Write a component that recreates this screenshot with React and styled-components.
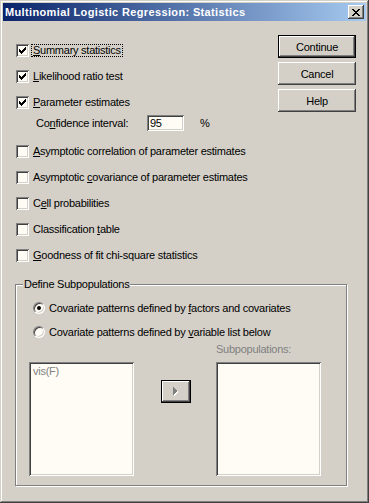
import styled, { createGlobalStyle, css } from 'styled-components';

const GlobalStyle = createGlobalStyle`
  html, body {
    margin: 0;
    padding: 0;
    background: #d4d0c8;
  }
  body {
    font-family: "Liberation Sans", Arial, sans-serif;
    font-size: 11px;
    letter-spacing: -0.25px;
    color: #000;
  }
`;

const raised = css`
  background: #d4d0c8;
  box-shadow: inset -1px -1px #404040, inset 1px 1px #fff,
    inset -2px -2px #808080, inset 2px 2px #d4d0c8;
`;

const sunken = css`
  background: #fffcf5;
  box-shadow: inset 1px 1px #808080, inset -1px -1px #fff,
    inset 2px 2px #404040, inset -2px -2px #d4d0c8;
`;

const Window = styled.div`
  width: 369px;
  height: 503px;
  box-sizing: border-box;
  padding: 3px;
  background: #d4d0c8;
  box-shadow: inset -1px -1px #404040, inset 1px 1px #d4d0c8,
    inset -2px -2px #808080, inset 2px 2px #fff;
  display: flex;
  flex-direction: column;
`;

const TitleBar = styled.div`
  height: 18px;
  display: flex;
  align-items: center;
  justify-content: space-between;
  padding: 0 2px 0 2px;
  background: linear-gradient(to right, #0a246a, #a6caf0);
`;

const TitleText = styled.span`
  color: #fff;
  font-weight: bold;
  font-size: 11px;
  letter-spacing: 0.36px;
  white-space: nowrap;
`;

const CloseButton = styled.div`
  ${raised};
  width: 16px;
  height: 14px;
  display: flex;
  align-items: center;
  justify-content: center;
`;

const Body = styled.div`
  flex: 1;
  display: flex;
  flex-direction: column;
  padding: 0 10px 0 12px;
`;

const Top = styled.div`
  display: flex;
  justify-content: space-between;
`;

const Options = styled.div`
  display: flex;
  flex-direction: column;
  gap: 13px;
  padding: 23px 0 0 1px;
`;

const CheckRow = styled.div`
  display: flex;
  align-items: center;
  height: 13px;
`;

const Box = styled.span`
  ${sunken};
  width: 13px;
  height: 13px;
  flex: none;
  display: flex;
  align-items: center;
  justify-content: center;
`;

const Label = styled.span`
  margin-left: 2px;
  padding: 0 1px;
  line-height: 11px;
  border: 1px dotted ${(p) => (p.$focused ? '#000' : 'transparent')};
  white-space: nowrap;
`;

const Key = styled.span`
  text-decoration: underline;
  text-underline-offset: 1px;
`;

const ConfRow = styled.div`
  display: flex;
  align-items: center;
  margin: -7px 0 1px;
`;

const ConfLabel = styled.span`
  width: 111px;
  padding-left: 20px;
  white-space: nowrap;
`;

const Field = styled.div`
  ${sunken};
  width: 37px;
  height: 16px;
  box-sizing: border-box;
  padding: 2px 3px;
  line-height: 12px;
`;

const Unit = styled.span`
  margin-left: 16px;
`;

const Buttons = styled.div`
  display: flex;
  flex-direction: column;
  gap: 4px;
  padding-top: 14px;
`;

const Button = styled.div`
  ${raised};
  width: 78px;
  height: 23px;
  display: flex;
  align-items: center;
  justify-content: center;
  ${(p) =>
    p.$default &&
    css`
      box-shadow: inset 0 0 0 1px #000, inset -2px -2px #404040,
        inset 2px 2px #fff, inset -3px -3px #808080;
    `}
`;

const Group = styled.fieldset`
  width: 332px;
  box-sizing: border-box;
  margin: 16px 0 0 0;
  padding: 11px 0 9px 0;
  border: 1px solid #808080;
  box-shadow: inset 1px 1px #fff, 1px 1px #fff;
  min-width: 0;
`;

const Legend = styled.legend`
  margin-left: 7px;
  padding: 0 1px;
  background: #d4d0c8;
  line-height: 13px;
`;

const Radios = styled.div`
  display: flex;
  flex-direction: column;
  gap: 12px;
  padding-left: 17px;
`;

const RadioRow = styled.div`
  display: flex;
  align-items: center;
  height: 12px;
`;

const Radio = styled.span`
  width: 12px;
  height: 12px;
  box-sizing: border-box;
  flex: none;
  border-radius: 50%;
  border: 1px solid;
  border-color: #808080 #fff #fff #808080;
  background: #fffcf5;
  box-shadow: inset 1px 1px #404040, inset -1px -1px #d4d0c8;
  display: flex;
  align-items: center;
  justify-content: center;
  &::after {
    content: '';
    width: 4px;
    height: 4px;
    border-radius: 50%;
    background: ${(p) => (p.$on ? '#000' : 'transparent')};
  }
`;

const RadioLabel = styled.span`
  margin-left: 4px;
  white-space: nowrap;
`;

const Lists = styled.div`
  display: flex;
  align-items: flex-start;
  padding: 5px 0 0 13px;
`;

const ListColumn = styled.div`
  display: flex;
  flex-direction: column;
  margin-left: ${(p) => p.$offset || 0}px;
`;

const Caption = styled.div`
  height: 13px;
  line-height: 13px;
  margin-bottom: 6px;
  color: #808080;
`;

const ListBox = styled.div`
  ${sunken};
  width: 105px;
  height: 114px;
  box-sizing: border-box;
  padding: 3px 4px;
  color: #808080;
`;

const MoveButton = styled.div`
  ${raised};
  box-shadow: inset 0 0 0 1px #000, inset -2px -2px #404040,
    inset 2px 2px #fff, inset -3px -3px #808080;
  width: 30px;
  height: 23px;
  margin: 37px 0 0 27px;
  display: flex;
  align-items: center;
  justify-content: center;
`;

const Check = () => (
  <svg width="7" height="7" viewBox="0 0 7 7" shapeRendering="crispEdges">
    <path
      d="M6 0h1v3h-1zM5 1h1v3h-1zM4 2h1v3h-1zM3 3h1v3h-1zM2 4h1v3h-1zM1 3h1v3h-1zM0 2h1v3h-1z"
      fill="#000"
    />
  </svg>
);

const CloseIcon = () => (
  <svg width="8" height="7" viewBox="0 0 8 7" shapeRendering="crispEdges">
    <path
      d="M0 0h2v1h-2zM6 0h2v1h-2zM1 1h2v1h-2zM5 1h2v1h-2zM2 2h4v1h-4zM3 3h2v1h-2zM2 4h4v1h-4zM1 5h2v1h-2zM5 5h2v1h-2zM0 6h2v1h-2zM6 6h2v1h-2z"
      fill="#000"
    />
  </svg>
);

const ArrowIcon = () => (
  <svg width="6" height="9" viewBox="0 0 6 9" shapeRendering="crispEdges">
    <path d="M1 1v8l4-4z" fill="#fff" />
    <path d="M0 0v8l4-4z" fill="#808080" />
  </svg>
);

function CheckOption({ checked, focused, children }) {
  return (
    <CheckRow>
      <Box>{checked && <Check />}</Box>
      <Label $focused={focused}>{children}</Label>
    </CheckRow>
  );
}

export default function App() {
  return (
    <>
      <GlobalStyle />
      <Window>
        <TitleBar>
          <TitleText>Multinomial Logistic Regression: Statistics</TitleText>
          <CloseButton>
            <CloseIcon />
          </CloseButton>
        </TitleBar>
        <Body>
          <Top>
            <Options>
              <CheckOption checked focused>
                <Key>S</Key>ummary statistics
              </CheckOption>
              <CheckOption checked>
                <Key>L</Key>ikelihood ratio test
              </CheckOption>
              <CheckOption checked>
                <Key>P</Key>arameter estimates
              </CheckOption>
              <ConfRow>
                <ConfLabel>
                  Co<Key>n</Key>fidence interval:
                </ConfLabel>
                <Field>95</Field>
                <Unit>%</Unit>
              </ConfRow>
              <CheckOption>
                <Key>A</Key>symptotic correlation of parameter estimates
              </CheckOption>
              <CheckOption>
                Asymptotic <Key>c</Key>ovariance of parameter estimates
              </CheckOption>
              <CheckOption>
                C<Key>e</Key>ll probabilities
              </CheckOption>
              <CheckOption>
                Classification <Key>t</Key>able
              </CheckOption>
              <CheckOption>
                <Key>G</Key>oodness of fit chi-square statistics
              </CheckOption>
            </Options>
            <Buttons>
              <Button $default>Continue</Button>
              <Button>Cancel</Button>
              <Button>Help</Button>
            </Buttons>
          </Top>
          <Group>
            <Legend>Define Subpopulations</Legend>
            <Radios>
              <RadioRow>
                <Radio $on />
                <RadioLabel>
                  Covariate patterns defined by <Key>f</Key>actors and covariates
                </RadioLabel>
              </RadioRow>
              <RadioRow>
                <Radio />
                <RadioLabel>
                  Covariate patterns defined by <Key>v</Key>ariable list below
                </RadioLabel>
              </RadioRow>
            </Radios>
            <Lists>
              <ListColumn>
                <Caption />
                <ListBox>vis(F)</ListBox>
              </ListColumn>
              <MoveButton>
                <ArrowIcon />
              </MoveButton>
              <ListColumn $offset={25}>
                <Caption>Subpopulations:</Caption>
                <ListBox />
              </ListColumn>
            </Lists>
          </Group>
        </Body>
      </Window>
    </>
  );
}
